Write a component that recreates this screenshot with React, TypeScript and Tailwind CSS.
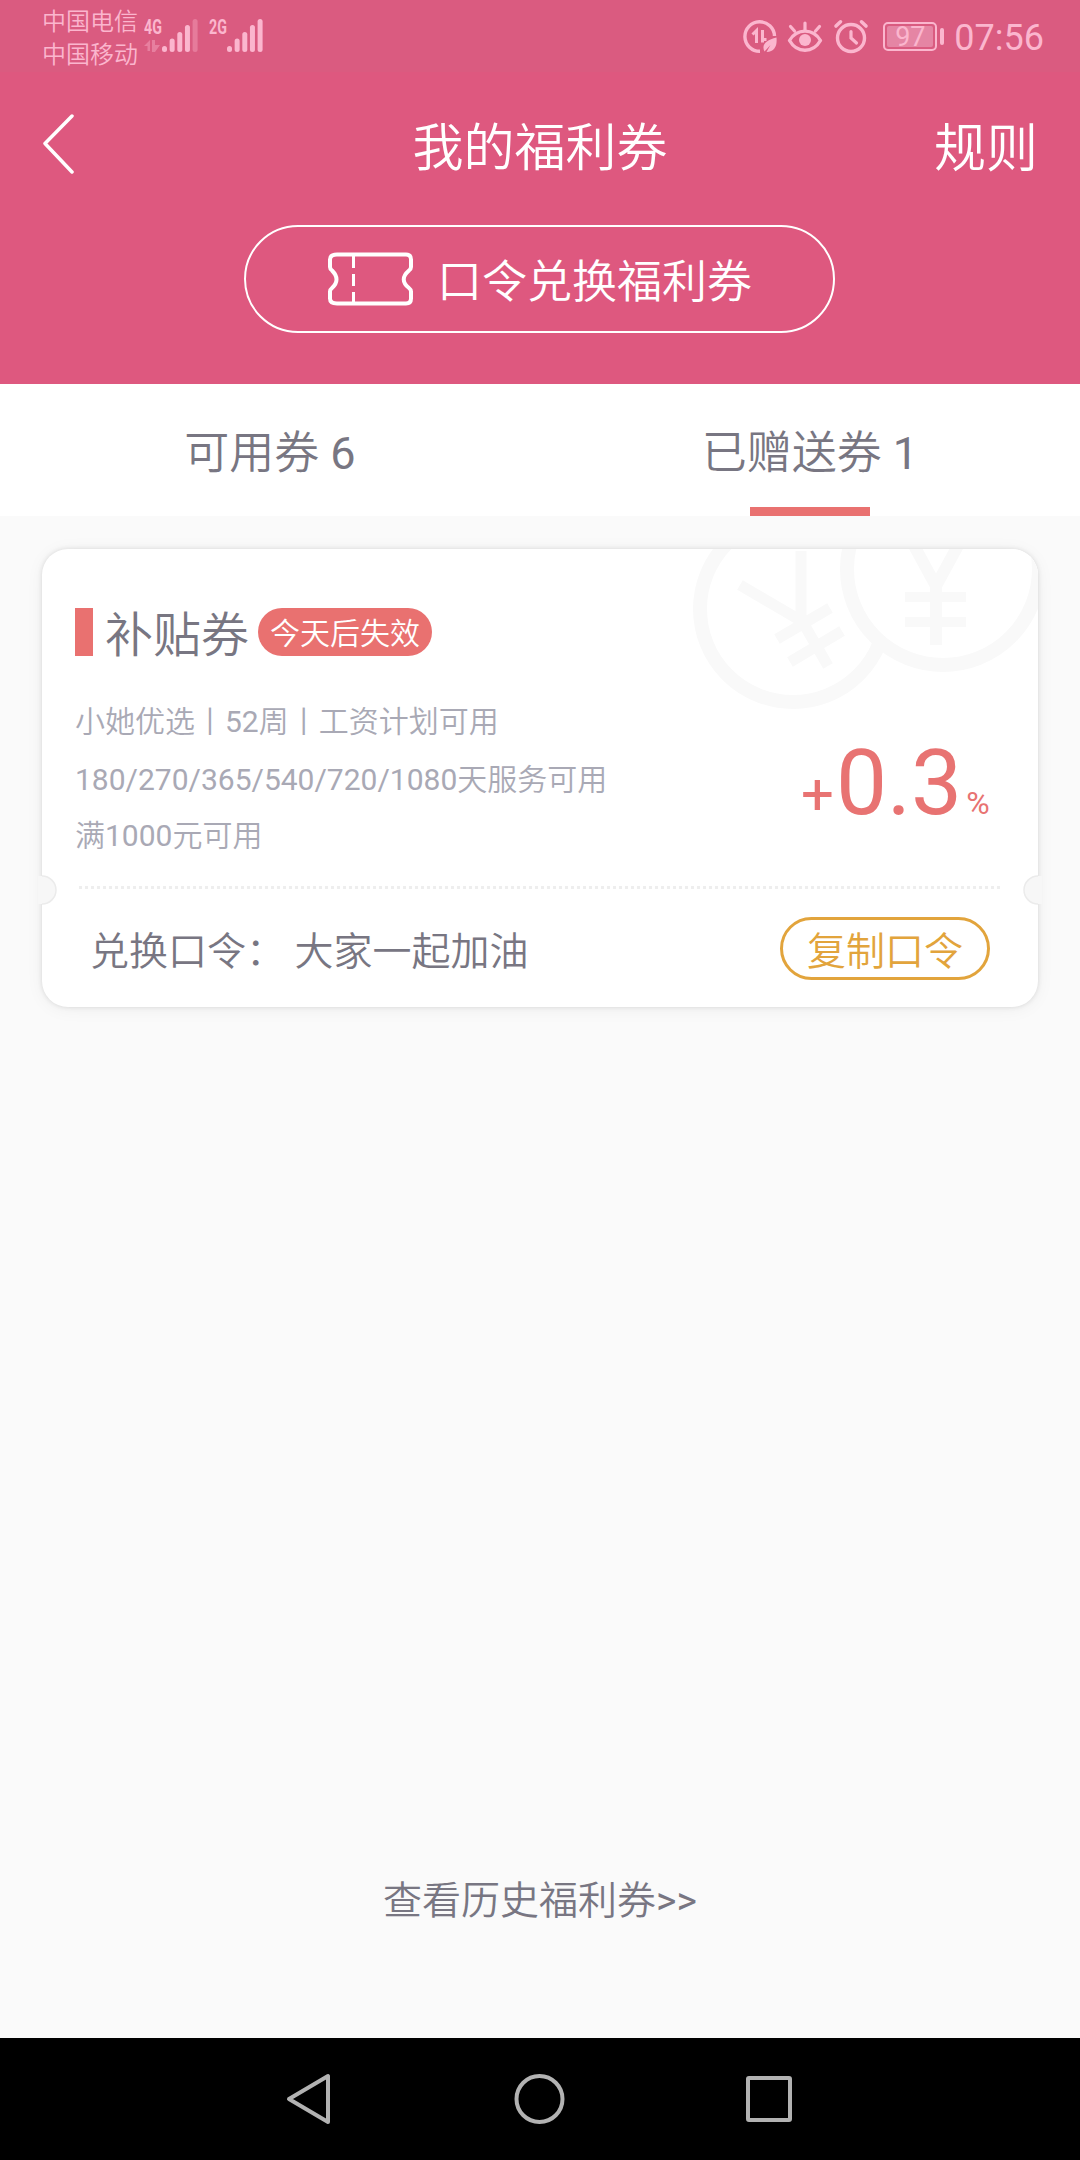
// ─── Welfare coupons screen ──────────────────────────────────────────────
// "Given away" tab of the coupon list, with system status and nav bars.

import type { ReactNode } from "react";

const terms = [
  { text: "小她优选丨52周丨工资计划可用", height: "h-[59px]" },
  { text: "180/270/365/540/720/1080天服务可用", height: "h-[57px]" },
  { text: "满1000元可用", height: "h-[55px]" },
];

const tabs = [
  { label: "可用券", count: 6, active: false },
  { label: "已赠送券", count: 1, active: true },
];

const barTops = [27, 19.5, 13, 6, 0];

function SignalBars({ weakLast = false }: { weakLast?: boolean }) {
  return (
    <svg width="36" height="33" viewBox="0 0 36 33" fill="currentColor">
      {barTops.map((top, i) => (
        <rect
          key={top}
          x={i * 7.65}
          y={top}
          width="5"
          height={33 - top}
          rx="2.5"
          opacity={weakLast && i === 4 ? 0.35 : 1}
        />
      ))}
    </svg>
  );
}

function StatusBar() {
  return (
    <div className="flex h-[72px] bg-[#da5b80] pl-[42px] pr-[36px] text-[#fbb6ce]">
      <div className="mt-[6px] text-[24px] font-[350] leading-[33px]">
        <div>中国电信</div>
        <div>中国移动</div>
      </div>
      <div className="ml-[6px] mt-[17px] w-[18px]">
        <div className="origin-left scale-x-[.68] text-[21px] font-bold leading-[20px]">4G</div>
        <svg className="mt-[2px]" width="18" height="14" viewBox="0 0 18 14" fill="currentColor" opacity="0.4">
          <path d="M0 7 6 1v11H3.500V7zM8 1h3v5h5l-5 7H8z" />
        </svg>
      </div>
      <div className="mt-[19px]">
        <SignalBars weakLast />
      </div>
      <div className="ml-[11px] mt-[17px] w-[18px]">
        <div className="origin-left scale-x-[.68] text-[21px] font-bold leading-[20px]">2G</div>
      </div>
      <div className="mt-[19px]">
        <SignalBars />
      </div>

      <div className="flex-1" />

      {/* data saver */}
      <svg className="mt-[19px]" width="36" height="36" viewBox="0 0 36 36" fill="none" stroke="currentColor">
        <path d="M18 32.300A14.800 14.800 0 1 1 32.500 17" strokeWidth="3.400" />
        <path d="m10.500 15.500 4-4V24M20.500 11v12.500M20 20.500h4.500" strokeWidth="3" />
        <path d="M34.500 18.500c.8 8-1.500 14.500-10 14.500l4-7-6 6.500c-3.500-7 2-11.500 12-14z" fill="currentColor" stroke="none" />
      </svg>
      {/* eye comfort */}
      <svg className="ml-[9px] mt-[19px]" width="36" height="36" viewBox="0 0 36 36" fill="none" stroke="currentColor" strokeLinecap="round">
        <path d="M2.500 21.500C10 9 26 9 33.500 21.500 26 34.500 10 34.500 2.500 21.500z" strokeWidth="3.400" strokeLinejoin="round" />
        <circle cx="18" cy="21" r="6" fill="currentColor" stroke="none" />
        <path d="M18 11V4M7.500 12 3.500 7.500M28.500 12l4-4.500" strokeWidth="3.200" />
      </svg>
      {/* alarm */}
      <svg className="ml-[10px] mt-[19px]" width="36" height="36" viewBox="0 0 36 36" fill="none" stroke="currentColor" strokeLinecap="round">
        <circle cx="18" cy="19" r="13.500" strokeWidth="3.400" />
        <path d="M18 12.500v6.500l5.500 5" strokeWidth="3.200" />
        <path d="m3 7 4.500-4.200M33 7l-4.500-4.200" strokeWidth="3.600" />
      </svg>

      <div className="ml-[14px] mt-[22px] flex h-[29px] w-[54px] rounded-[5px] border-2 border-current p-[2px]">
        <div className="flex-1 rounded-[2px] bg-[#e585a4] text-center text-[27px] leading-[23px]">97</div>
      </div>
      <div className="ml-[3px] mt-[28px] h-[17px] w-[4px] rounded-full bg-current" />
      <div className="ml-[10px] mt-[17px] text-[36px] leading-[42px]">07:56</div>
    </div>
  );
}

function TicketIcon() {
  return (
    <svg width="88" height="56" viewBox="0 0 88 56" fill="none" stroke="white" strokeWidth="4" strokeLinejoin="round">
      <path d="M10 3.500H79q5 0 5 5V16q0 2-2 3.500-10.500 9 0 17.500 2 1.500 2 3.500v7q0 5-5 5H10q-7 0-7-5v-7Q3 38.500 5 37q9-8.500 0-17.500-2-1.500-2-3.500V8.500q0-5 7-5z" />
      <path d="M26.500 5v12M26.500 23v12M26.500 41v11" strokeWidth="3" />
    </svg>
  );
}

function Header() {
  return (
    <header className="h-[312px] bg-[#de587f] text-white">
      <div className="flex h-[144px] items-center justify-between pl-[42px] pr-[42px] pt-[4px] text-[51px] font-[350]">
        <svg className="w-[104px]" width="104" height="64" viewBox="0 0 104 64" fill="none" stroke="white" strokeWidth="3.500" strokeLinecap="round" strokeLinejoin="round">
          <path d="M30 2 3 29.500 30 58" />
        </svg>
        <h1 className="pt-[7px]">我的福利券</h1>
        <button className="pt-[7px] text-[52px]">规则</button>
      </div>
      <button className="ml-[244px] mt-[9px] flex h-[108px] w-[591px] items-center rounded-full border-2 border-white pl-[81px]">
        <TicketIcon />
        <span className="ml-[22px] pt-[7px] text-[45px] font-[350]">口令兑换福利券</span>
      </button>
    </header>
  );
}

function Tabs() {
  return (
    <nav className="flex h-[132px] bg-white text-[45px] text-[#787682]">
      {tabs.map(({ label, count, active }) => (
        <div key={label} className="flex flex-1 flex-col items-center">
          <div className="flex h-[123px] items-center pt-[16px] font-[350]">
            <span className="whitespace-pre">
              {label} <span className="font-normal">{count}</span>
            </span>
          </div>
          {active && <div className="h-[9px] w-[120px] bg-[#e97170]" />}
        </div>
      ))}
    </nav>
  );
}

// Faint pair of yen coins in the card's top right corner.
function Coins() {
  return (
    <svg className="absolute right-0 top-0 rounded-tr-[26px]" width="346" height="161" viewBox="692 549 346 161" fill="none" stroke="#f9f9f9">
      <circle cx="793" cy="609" r="93" strokeWidth="14" />
      <path d="m740 585 58 34M801 551v68l27 47M777 639l53-31M790 662l52-31" strokeWidth="11" />
      <circle cx="943" cy="569" r="96" fill="white" strokeWidth="14" />
      <path d="m911 540 25 46 25-46M936 582v63" strokeWidth="12" />
      <path d="M905 597h61M905 622h61" strokeWidth="10" />
    </svg>
  );
}

// Half-round bite that also hides the card's edge behind it.
function Notch({ className }: { className: string }) {
  return (
    <svg className={`absolute top-[326px] ${className}`} width="19" height="30" viewBox="0 0 19 30" fill="#f7f7f7">
      <path d="M0 1h4a14 14 0 0 1 0 28H0z" />
      <path d="M4 1a14 14 0 0 1 0 28" fill="none" stroke="#ebebeb" strokeWidth="1.500" />
    </svg>
  );
}

// Latin runs are set in regular weight, the Chinese text around them lighter.
function TermText({ text }: { text: string }) {
  return text.split(/([\d/]+)/).map((part, i) => (
    <span key={i} className={i % 2 ? "font-normal" : "font-[350]"}>
      {part}
    </span>
  ));
}

function CouponCard() {
  return (
    <section className="relative mx-[42px] mt-[33px] h-[458px] rounded-[26px] bg-white shadow-[0_0_5px_rgba(0,0,0,.12),0_2px_18px_rgba(0,0,0,.05)]">
      <Coins />
      <Notch className="-left-[4px]" />
      <Notch className="-right-[4px] rotate-180" />

      <div className="relative flex h-[337px] flex-col pl-[33px] pt-[59px]">
        <div className="flex h-[48px] items-center">
          <div className="h-[48px] w-[18px] bg-[#e97170]" />
          <h2 className="ml-[12px] w-[153px] pt-[8px] text-[48px] font-[350] leading-[48px] text-[#787682]">补贴券</h2>
          <span className="flex h-[48px] w-[174px] items-center justify-center rounded-full bg-[#e97170] pt-[2px] text-[30px] font-[350] text-white">
            今天后失效
          </span>
        </div>
        <div className="flex">
          <div className="mt-[36px] w-[726px] text-[30px] text-[#a9a9b5]">
            {terms.map(({ text, height }) => (
              <div key={text} className={`flex items-center ${height}`}>
                <TermText text={text} />
              </div>
            ))}
          </div>
          <div className="mt-[75px] flex h-[96px] items-baseline text-[#e87372]">
            <span className="text-[58px] leading-[105px]">+</span>
            <span className="ml-[2px] text-[91px] leading-[105px]">0.3</span>
            <span className="ml-[4px] text-[32px]">%</span>
          </div>
        </div>
      </div>

      <div className="ml-[37px] mr-[37px] h-[3px] bg-[repeating-linear-gradient(90deg,#eee_0_3px,transparent_3px_6px)]" />

      <div className="flex h-[118px] items-center pl-[48px] pr-[48px] text-[39px] font-[350] text-[#787682]">
        <span className="flex-1 whitespace-pre pt-[9px]">兑换口令： 大家一起加油</span>
        <button className="flex h-[63px] w-[210px] items-center justify-center rounded-full border-3 border-[#e2a43c] pt-[8px] text-[#e2a43c]">
          复制口令
        </button>
      </div>
    </section>
  );
}

function NavSlot({ children }: { children: ReactNode }) {
  return (
    <svg width="52" height="52" viewBox="0 0 52 52" fill="none" stroke="#b2b2b2" strokeWidth="4" strokeLinejoin="round">
      {children}
    </svg>
  );
}

function NavBar() {
  return (
    <div className="flex h-[122px] items-center justify-between bg-black pb-[1px] pl-[284px] pr-[285px]">
      <NavSlot>
        <path d="M44 3v46L5 26z" />
      </NavSlot>
      <NavSlot>
        <circle cx="25.500" cy="26" r="23" />
      </NavSlot>
      <NavSlot>
        <rect x="5" y="5" width="42" height="42" rx="1" />
      </NavSlot>
    </div>
  );
}

export default function App() {
  return (
    <div className="flex h-[2160px] w-[1080px] flex-col overflow-hidden bg-[#fafafa] font-['Roboto','Noto_Sans_CJK_SC',sans-serif]">
      <StatusBar />
      <Header />
      <Tabs />
      <CouponCard />
      <div className="flex-1" />
      <a className="mb-[107px] text-center text-[39px] font-[350] leading-[60px] text-[#787682]">
        查看历史福利券<span className="font-normal">&gt;&gt;</span>
      </a>
      <NavBar />
    </div>
  );
}
